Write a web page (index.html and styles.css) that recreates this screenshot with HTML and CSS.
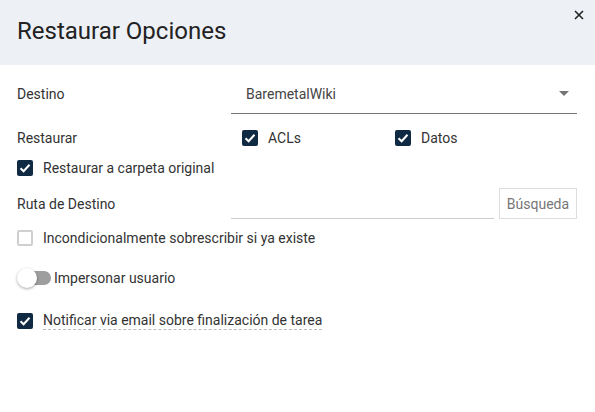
FILE: index.html
```html
<!DOCTYPE html>
<html lang="es">
<head>
  <meta charset="UTF-8" />
  <title>Restaurar Opciones</title>
  <link rel="stylesheet" href="styles.css">
</head>
<body>
<div class="dialog">
  <header class="dialog-head">
    <h2>Restaurar Opciones</h2>
    <button class="close" aria-label="Cerrar">
      <svg width="10" height="10" viewBox="0 0 10 10"><path d="M1 1L9 9M9 1L1 9" stroke="#222" stroke-width="1.6"/></svg>
    </button>
  </header>

  <div class="form">
    <div class="row row-select">
      <span class="label">Destino</span>
      <div class="select">
        <span>BaremetalWiki</span>
        <svg width="10" height="5" viewBox="0 0 10 5"><path d="M0 0H10L5 5Z" fill="#757575"/></svg>
      </div>
    </div>

    <div class="row row-restore">
      <span class="label">Restaurar</span>
      <div class="checks">
        <label class="check acl"><span class="box on"><svg viewBox="0 0 16 16"><path d="M3.5 8.2L6.6 11.2L12.5 4.8" fill="none" stroke="#fff" stroke-width="2"/></svg></span>ACLs</label>
        <label class="check"><span class="box on"><svg viewBox="0 0 16 16"><path d="M3.5 8.2L6.6 11.2L12.5 4.8" fill="none" stroke="#fff" stroke-width="2"/></svg></span>Datos</label>
      </div>
    </div>

    <div class="row row-orig">
      <label class="check"><span class="box on"><svg viewBox="0 0 16 16"><path d="M3.5 8.2L6.6 11.2L12.5 4.8" fill="none" stroke="#fff" stroke-width="2"/></svg></span>Restaurar a carpeta original</label>
    </div>

    <div class="row row-path">
      <span class="label">Ruta de Destino</span>
      <div class="path-input"></div>
      <button class="search">Búsqueda</button>
    </div>

    <div class="row row-over">
      <label class="check"><span class="box"></span>Incondicionalmente sobrescribir si ya existe</label>
    </div>

    <div class="row row-toggle">
      <span class="toggle"><span class="knob"></span></span>
      <span>Impersonar usuario</span>
    </div>

    <div class="row row-notify">
      <label class="check"><span class="box on"><svg viewBox="0 0 16 16"><path d="M3.5 8.2L6.6 11.2L12.5 4.8" fill="none" stroke="#fff" stroke-width="2"/></svg></span><span class="dashed">Notificar via email sobre finalización de tarea</span></label>
    </div>
  </div>
</div>
</body>
</html>
```

FILE: styles.css
```css
* { box-sizing: border-box; margin: 0; padding: 0; }
body {
  font-family: Roboto, "Liberation Sans", sans-serif;
  background: #fff;
  color: #333;
  font-size: 14px;
}
.dialog {
  width: 595px;
  height: 412px;
  background: #fff;
}
.dialog-head {
  position: relative;
  height: 65px;
  background: #edf0f5;
  padding: 15px 17px 0;
}
.dialog-head h2 {
  font-weight: 400;
  font-size: 24px;
  line-height: 32px;
  color: #222;
}
.close {
  position: absolute;
  top: 10px;
  right: 11px;
  width: 10px;
  height: 10px;
  border: none;
  background: none;
  display: flex;
}
.form {
  padding: 9px 18px 0 17px;
}
.row {
  display: flex;
  align-items: center;
  height: 30px;
}
.label {
  width: 214px;
  flex-shrink: 0;
}
.row-select { height: 40px; }
.select {
  flex: 1;
  height: 40px;
  border-bottom: 1px solid #757575;
  display: flex;
  align-items: center;
  justify-content: space-between;
  padding: 0 8px 0 15px;
  color: #444;
}
.row-restore { margin-top: 9px; }
.checks {
  display: flex;
  padding-left: 11px;
}
.check {
  display: flex;
  align-items: center;
  gap: 10px;
}
.check.acl { width: 153px; }
.box {
  width: 16px;
  height: 16px;
  border: 2px solid #cfcfcf;
  border-radius: 2px;
  flex-shrink: 0;
  display: flex;
}
.box.on {
  background: #102a43;
  border: none;
}
.box svg { width: 16px; height: 16px; }
.row-path {
  margin-top: 5px;
  height: 31px;
}
.path-input {
  width: 263px;
  height: 31px;
  border-bottom: 1px solid #ccc;
}
.search {
  margin-left: 5px;
  flex: 1;
  height: 31px;
  border: 1px solid #ddd;
  background: #fff;
  color: #777;
  font-family: inherit;
  font-size: 14px;
}
.row-over { margin-top: 4px; }
.row-toggle {
  margin-top: 10px;
  gap: 3px;
}
.toggle {
  position: relative;
  width: 34px;
  height: 20px;
  display: flex;
  align-items: center;
  justify-content: flex-end;
}
.toggle::before {
  content: "";
  width: 26px;
  height: 14px;
  border-radius: 7px;
  background: #9e9e9e;
}
.knob {
  position: absolute;
  left: 0;
  top: 0;
  width: 20px;
  height: 20px;
  border-radius: 50%;
  background: #fff;
  box-shadow: 0 1px 3px rgba(0, 0, 0, 0.35);
}
.row-notify { margin-top: 13px; }
.dashed {
  border-bottom: 1px dashed #bbb;
  padding-bottom: 1px;
}
```
